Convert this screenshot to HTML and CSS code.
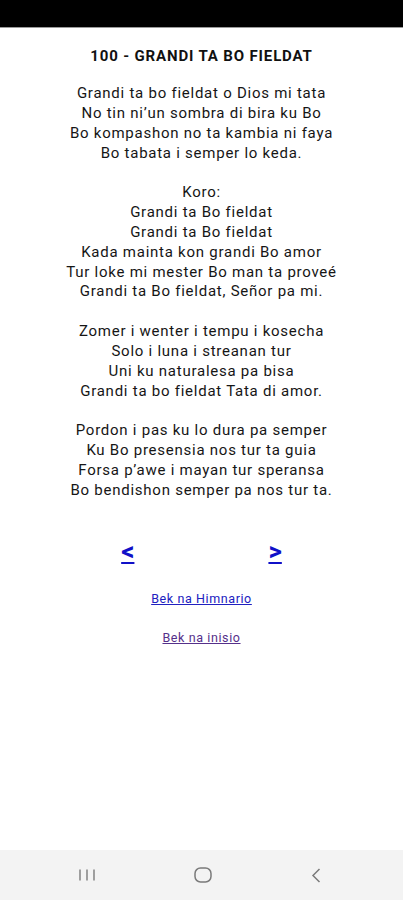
FILE: index.html
```html
<!DOCTYPE html>
<html>
<head>
<meta charset="utf-8">
<link rel="stylesheet" href="styles.css">
</head>
<body>
<div class="statusbar"></div>
<main class="content">
  <h1 class="title">100 - GRANDI TA BO FIELDAT</h1>
  <div class="lyrics">
    <p class="stanza">Grandi ta bo fieldat o Dios mi tata<br>No tin ni’un sombra di bira ku Bo<br>Bo kompashon no ta kambia ni faya<br>Bo tabata i semper lo keda.</p>
    <p class="stanza">Koro:<br>Grandi ta Bo fieldat<br>Grandi ta Bo fieldat<br>Kada mainta kon grandi Bo amor<br>Tur loke mi mester Bo man ta proveé<br>Grandi ta Bo fieldat, Señor pa mi.</p>
    <p class="stanza">Zomer i wenter i tempu i kosecha<br>Solo i luna i streanan tur<br>Uni ku naturalesa pa bisa<br>Grandi ta bo fieldat Tata di amor.</p>
    <p class="stanza">Pordon i pas ku lo dura pa semper<br>Ku Bo presensia nos tur ta guia<br>Forsa p’awe i mayan tur speransa<br>Bo bendishon semper pa nos tur ta.</p>
  </div>
  <div class="pager">
    <a class="arrow" href="#prev">&lt;</a>
    <a class="arrow" href="#next">&gt;</a>
  </div>
  <a class="back" href="#himnario">Bek na Himnario</a>
  <a class="back visited" href="#inisio">Bek na inisio</a>
</main>
<nav class="navbar">
  <span class="nav-slot"><svg width="18" height="12" viewBox="0 0 18 12"><g stroke="#7a7a7a" stroke-width="1.4" fill="none"><line x1="2" y1="0.5" x2="2" y2="11.5"/><line x1="9" y1="0.5" x2="9" y2="11.5"/><line x1="16" y1="0.5" x2="16" y2="11.5"/></g></svg></span>
  <span class="nav-slot"><svg width="18" height="16" viewBox="0 0 18 16"><rect x="1" y="1" width="16" height="14" rx="5.5" stroke="#7a7a7a" stroke-width="1.5" fill="none"/></svg></span>
  <span class="nav-slot"><svg width="10" height="15" viewBox="0 0 10 15"><polyline points="8.5,1 2,7.5 8.5,14" stroke="#7a7a7a" stroke-width="1.5" fill="none"/></svg></span>
</nav>
</body>
</html>
```
FILE: styles.css
```css
html, body {
  margin: 0;
  padding: 0;
  background: #ffffff;
}
body {
  display: flex;
  flex-direction: column;
  font-family: Roboto, "Liberation Sans", Arial, sans-serif;
  color: #111;
  width: 403px;
  height: 900px;
  overflow: hidden;
}
.statusbar {
  height: 27px;
  background: #000;
  border-bottom: 1px solid #9a9a9a;
  flex: none;
}
.content {
  flex: 1;
  display: flex;
  flex-direction: column;
  align-items: center;
  text-align: center;
}
.title {
  font-size: 15px;
  font-weight: bold;
  letter-spacing: 0.85px;
  margin: 18px 0 0;
  line-height: 20px;
  color: #111;
}
.lyrics {
  margin-top: 18px;
}
.stanza {
  margin: 0 0 19.85px;
  font-size: 15px;
  letter-spacing: 0.75px;
  line-height: 19.85px;
  color: #161616;
}
.pager {
  display: flex;
  justify-content: center;
  gap: 134px;
  margin-top: 15px;
}
.arrow {
  font-size: 26px;
  font-weight: bold;
  color: #1010c8;
  line-height: 30px;
}
.back {
  font-size: 12.5px;
  letter-spacing: 0.6px;
  color: #2020c0;
  margin-top: 23px;
  line-height: 19px;
}
.back.visited {
  color: #55308a;
  margin-top: 20px;
}
.navbar {
  flex: none;
  height: 50px;
  background: #f3f3f3;
  display: flex;
  align-items: center;
  justify-content: center;
}
.nav-slot {
  width: 113px;
  display: flex;
  justify-content: center;
  align-items: center;
}
.nav-slot:first-child {
  padding-right: 3px;
}
.nav-slot svg {
  display: block;
}
```
